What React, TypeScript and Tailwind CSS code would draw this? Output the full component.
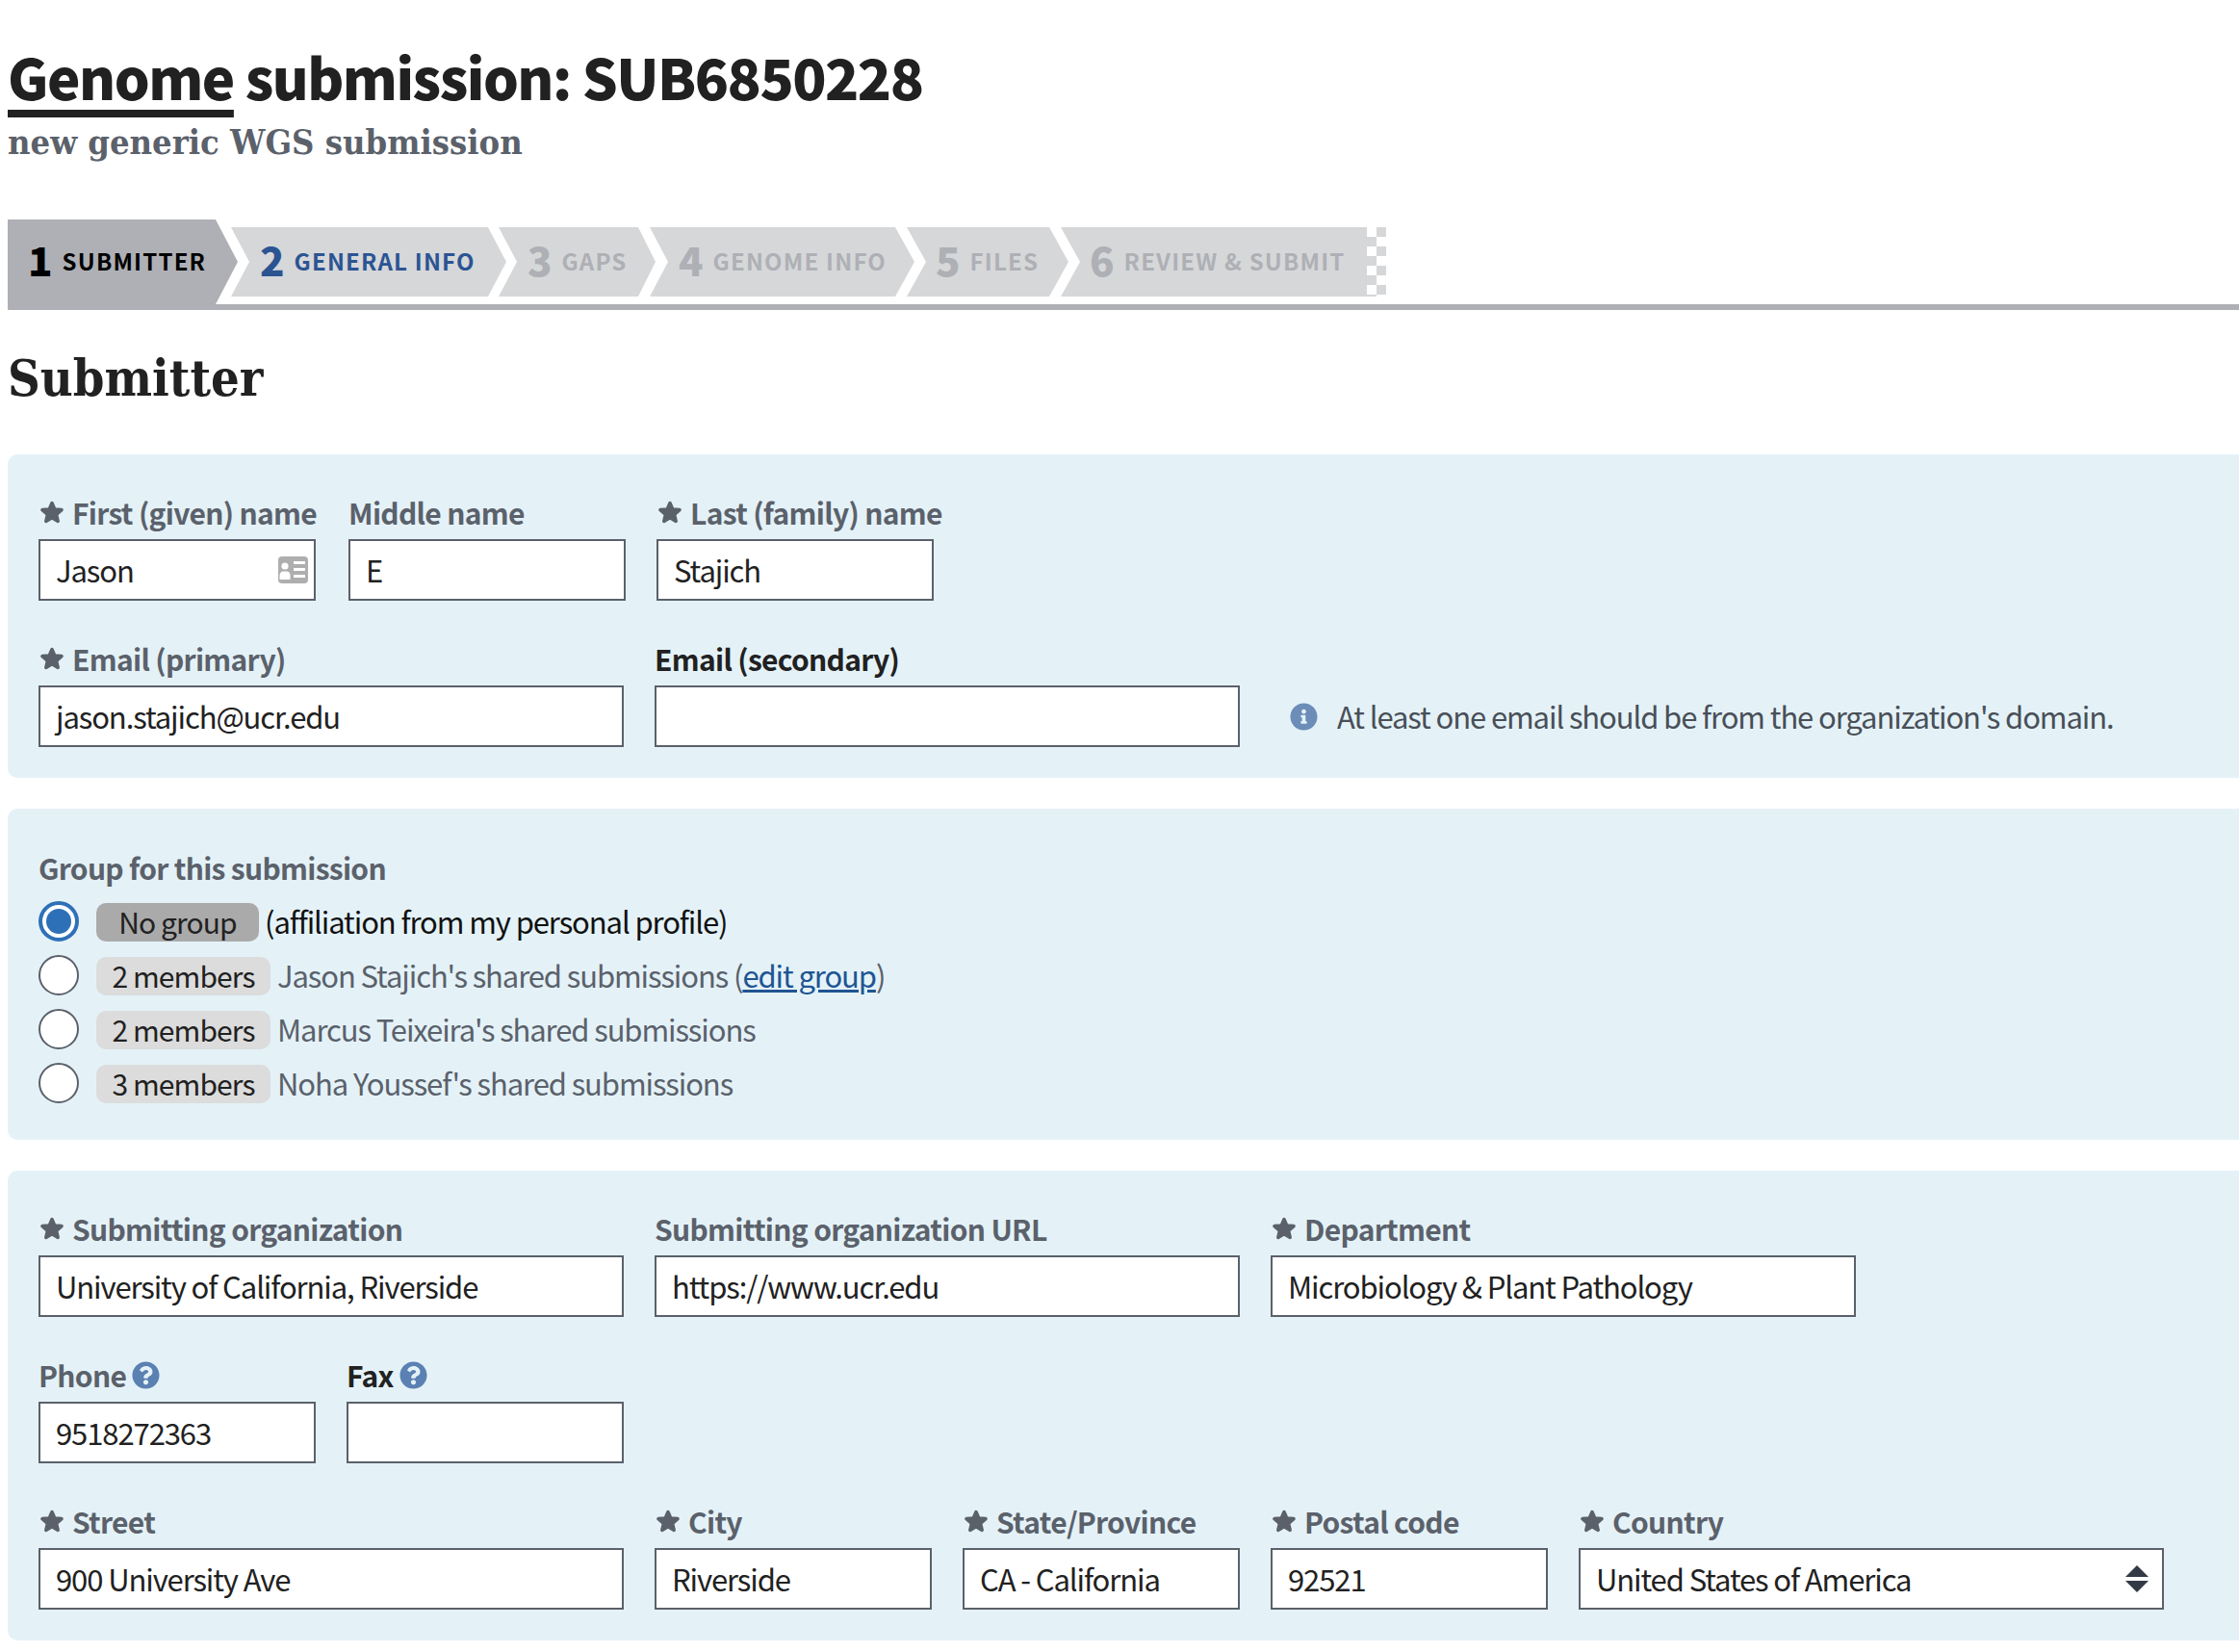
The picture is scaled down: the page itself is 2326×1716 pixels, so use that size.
import React from "react";
import { FaQuestionCircle, FaInfoCircle } from "react-icons/fa";

function Star() {
  return (
    <svg className="w-[24px] h-[24px] mr-[9px] ml-[2px] mb-[1px] shrink-0" viewBox="0 0 24 24" fill="#5b616b" stroke="#5b616b" strokeWidth="3.5" strokeLinejoin="round">
      <path d="M12 2.5 L14.8 9 L22 9.6 L16.6 14.4 L18.2 21.4 L12 17.8 L5.8 21.4 L7.4 14.4 L2 9.6 L9.2 9 Z" />
    </svg>
  );
}

function Card() {
  return (
    <svg width="31" height="28" viewBox="0 0 31 28">
      <rect width="31" height="28" rx="4" fill="#aeaeae" />
      <circle cx="7" cy="10" r="3.6" fill="#fff" />
      <path d="M1.5 24 V20 Q1.5 15.5 5.5 15.5 H8.5 Q12.5 15.5 12.5 20 V24 Z" fill="#fff" />
      <rect x="16" y="5" width="12" height="3" fill="#fff" />
      <rect x="16" y="12" width="12" height="3" fill="#fff" />
      <rect x="16" y="19" width="12" height="3" fill="#fff" />
    </svg>
  );
}

function Field({ w, label, value, req, dark, help, icon, select }: { w: string; label: string; value?: string; req?: boolean; dark?: boolean; help?: boolean; icon?: boolean; select?: boolean }) {
  return (
    <div className={`${w} shrink-0`}>
      <div className={`h-[36px] mb-[9px] pb-[2px] flex items-center whitespace-nowrap text-[30px] leading-[34px] font-bold tracking-[-0.7px] ${dark ? "text-[#212121]" : "text-[#5b616b]"}`}>
        {req && <Star />}
        <span>{label}</span>
        {help && <FaQuestionCircle className="w-[29px] h-[29px] ml-[6px] shrink-0 text-[#5b80b2]" />}
      </div>
      <div className="h-[64px] border-2 border-[#5b616b] bg-white pl-[16px] pr-[6px] flex items-center justify-between text-[31px] leading-[40px] tracking-[-1.1px] text-[#212121] whitespace-nowrap">
        <span>{value}</span>
        {icon && <Card />}
        {select && (
          <svg className="mr-[8px]" width="24" height="28" viewBox="0 0 24 28" fill="#323a45">
            <path d="M12 0 L24 12 H0 Z" />
            <path d="M0 16 H24 L12 28 Z" />
          </svg>
        )}
      </div>
    </div>
  );
}

function Radio({ on }: { on?: boolean }) {
  return on ? (
    <span className="w-[42px] h-[42px] shrink-0 rounded-full border-[4px] border-[#2e70b8] bg-white p-[4px] block">
      <span className="block w-full h-full rounded-full bg-[#2e70b8]" />
    </span>
  ) : (
    <span className="w-[42px] h-[42px] shrink-0 rounded-full border-2 border-[#5b616b] bg-white block" />
  );
}

function Chip({ text, on }: { text: string; on?: boolean }) {
  return (
    <span className={`h-[40px] mt-[2px] pb-[2px] rounded-[10px] flex items-center justify-center whitespace-nowrap text-[30px] tracking-[-0.9px] text-[#212121] ${on ? "w-[169px] bg-[#aaaaaa]" : "w-[181px] bg-[#dcdcdc]"}`}>
      {text}
    </span>
  );
}

function Step({ n, label, w, ml, className, numClass }: { n: string; label: string; w: string; ml: string; className: string; numClass: string }) {
  return (
    <div className={`${w} ${ml} ${className} h-[72px] mt-[8px] bg-[#d6d7d9] shrink-0 flex items-center pl-[30px] whitespace-nowrap`}>
      <span className={`text-[42px] leading-[60px] pb-[6px] font-black mr-[10px] ${numClass}`}>{n}</span>
      <span className={`text-[24px] leading-[60px] pb-[2px] font-bold tracking-[1.2px] uppercase ${numClass}`}>{label}</span>
    </div>
  );
}

export default function App() {
  return (
    <div className="h-[1716px] w-[2326px] overflow-hidden bg-white font-['Noto_Sans_CJK_SC',sans-serif] text-[#212121]">
      <div className="pl-[8px] pt-[43px]">
        <h1 className="text-[58px] leading-[72px] font-black tracking-[-1.5px] h-[72px] whitespace-nowrap">
          <span className="underline decoration-[8px] underline-offset-[10px]">Genome</span> submission: SUB6850228
        </h1>
        <p className="mt-[8px] h-[48px] text-[36px] leading-[48px] font-bold text-[#5b616b] font-['DejaVu_Serif_Condensed','DejaVu_Serif',serif]">new generic WGS submission</p>
      </div>

      <div className="mt-[57px] ml-[8px] h-[94px] border-b-[6px] border-[#aeb0b5] flex items-start">
        <div className="w-[239px] h-[88px] shrink-0 bg-[#aeb0b5] [clip-path:polygon(0_0,216px_0,239px_44px,216px_88px,0_88px)] flex items-center pl-[21px] whitespace-nowrap text-black">
          <span className="text-[42px] leading-[60px] pb-[6px] font-black mr-[10px]">1</span>
          <span className="text-[24px] leading-[60px] pb-[2px] font-bold tracking-[1.2px] uppercase">Submitter</span>
        </div>
        <Step n="2" label="General info" w="w-[286px]" ml="-ml-[7px]" numClass="text-[#2b5493]" className="[clip-path:polygon(0_0,267px_0,286px_36px,267px_72px,0_72px,19px_36px)]" />
        <Step n="3" label="Gaps" w="w-[163px]" ml="-ml-[8px]" numClass="text-[#aeb0b5]" className="[clip-path:polygon(0_0,145px_0,163px_36px,145px_72px,0_72px,19px_36px)]" />
        <Step n="4" label="Genome info" w="w-[275px]" ml="-ml-[6px]" numClass="text-[#aeb0b5]" className="[clip-path:polygon(0_0,255px_0,275px_36px,255px_72px,0_72px,19px_36px)]" />
        <Step n="5" label="Files" w="w-[168px]" ml="-ml-[8px]" numClass="text-[#aeb0b5]" className="[clip-path:polygon(0_0,148px_0,168px_36px,148px_72px,0_72px,20px_36px)]" />
        <Step n="6" label="Review & submit" w="w-[318px]" ml="-ml-[8px]" numClass="text-[#aeb0b5]" className="[clip-path:polygon(0_0,318px_0,318px_72px,0_72px,20px_36px)]" />
        <div className="w-[20px] h-[72px] mt-[8px] shrink-0 bg-[conic-gradient(#d6d7d9_25%,transparent_0_50%,#d6d7d9_0_75%,transparent_0)] bg-[length:20px_20px]" />
      </div>

      <h2 className="pl-[8px] mt-[41px] mb-[49px] h-[60px] text-[52px] leading-[60px] font-bold font-['DejaVu_Serif_Condensed','DejaVu_Serif',serif]">Submitter</h2>

      <div className="ml-[8px] rounded-l-[10px] bg-[#e4f2f8] pl-[32px] pt-[43px] pb-[32px] flex flex-col gap-[43px]">
        <div className="flex">
          <Field w="w-[288px]" label="First (given) name" value="Jason" req icon />
          <Field w="w-[288px] ml-[34px]" label="Middle name" value="E" />
          <Field w="w-[288px] ml-[32px]" label="Last (family) name" value="Stajich" req />
        </div>
        <div className="flex gap-[32px]">
          <Field w="w-[608px]" label="Email (primary)" value="jason.stajich@ucr.edu" req />
          <Field w="w-[608px]" label="Email (secondary)" dark />
          <div className="self-end h-[64px] ml-[20px] flex items-center text-[31px] tracking-[-1.1px] text-[#494f57] whitespace-nowrap">
            <FaInfoCircle className="w-[29px] h-[29px] mr-[20px] text-[#6b8db8]" />
            At least one email should be from the organization's domain.
          </div>
        </div>
      </div>

      <div className="mt-[32px] ml-[8px] rounded-l-[10px] bg-[#e4f2f8] pl-[32px] pt-[44px] pb-[38px]">
        <div className="h-[36px] text-[30px] leading-[34px] font-bold tracking-[-0.7px] text-[#5b616b]">Group for this submission</div>
        <div className="mt-[16px] flex flex-col gap-[14px] text-[31px] leading-[42px] tracking-[-1.1px] text-[#5b616b]">
          <div className="flex gap-[18px] h-[42px]">
            <Radio on />
            <div className="flex gap-[6px] text-[#111111]">
              <Chip text="No group" on />
              <span>(affiliation from my personal profile)</span>
            </div>
          </div>
          <div className="flex gap-[18px] h-[42px]">
            <Radio />
            <div className="flex gap-[7px]">
              <Chip text="2 members" />
              <span>
                Jason Stajich's shared submissions (<a className="text-[#205493] underline">edit group</a>)
              </span>
            </div>
          </div>
          <div className="flex gap-[18px] h-[42px]">
            <Radio />
            <div className="flex gap-[7px]">
              <Chip text="2 members" />
              <span>Marcus Teixeira's shared submissions</span>
            </div>
          </div>
          <div className="flex gap-[18px] h-[42px]">
            <Radio />
            <div className="flex gap-[7px]">
              <Chip text="3 members" />
              <span>Noha Youssef's shared submissions</span>
            </div>
          </div>
        </div>
      </div>

      <div className="mt-[32px] ml-[8px] rounded-l-[10px] bg-[#e4f2f8] pl-[32px] pt-[43px] pb-[32px] flex flex-col gap-[43px]">
        <div className="flex gap-[32px]">
          <Field w="w-[608px]" label="Submitting organization" value="University of California, Riverside" req />
          <Field w="w-[608px]" label="Submitting organization URL" value="https://www.ucr.edu" />
          <Field w="w-[608px]" label="Department" value="Microbiology & Plant Pathology" req />
        </div>
        <div className="flex gap-[32px]">
          <Field w="w-[288px]" label="Phone" value="9518272363" help />
          <Field w="w-[288px]" label="Fax" dark help />
        </div>
        <div className="flex gap-[32px]">
          <Field w="w-[608px]" label="Street" value="900 University Ave" req />
          <Field w="w-[288px]" label="City" value="Riverside" req />
          <Field w="w-[288px]" label="State/Province" value="CA - California" req />
          <Field w="w-[288px]" label="Postal code" value="92521" req />
          <Field w="w-[608px]" label="Country" value="United States of America" req select />
        </div>
      </div>
    </div>
  );
}
